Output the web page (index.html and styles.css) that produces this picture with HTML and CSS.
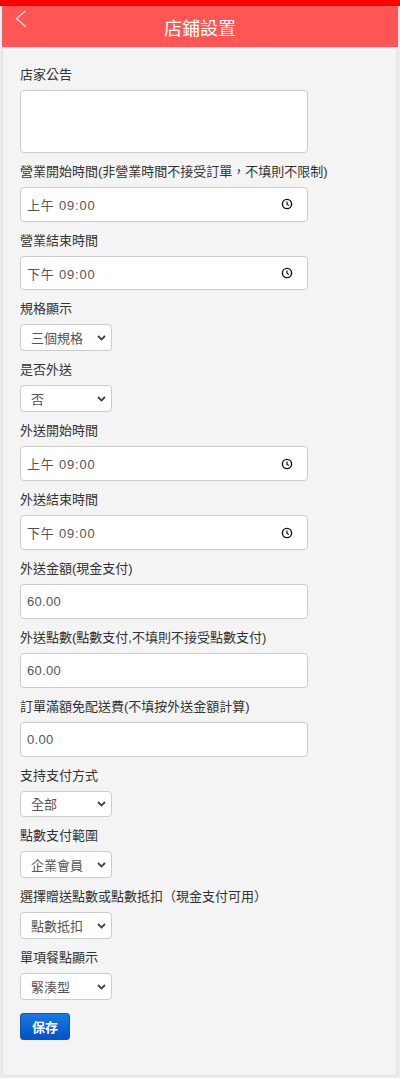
FILE: index.html
```html
<!DOCTYPE html>
<html lang="zh-Hant">
<head>
<meta charset="utf-8">
<title>店鋪設置</title>
<link rel="stylesheet" href="styles.css">
</head>
<body>
<div class="topbar"></div>
<div class="wrap">
  <header class="header">
    <svg class="back" width="14" height="20" viewBox="0 0 14 20"><polyline points="11,1.5 1.5,9.5 11,18" fill="none" stroke="#ffd6d6" stroke-width="1.4"/></svg>
    <h1 class="title">店鋪設置</h1>
  </header>
  <main class="panel">
    <label class="lbl first">店家公告</label>
    <div class="textarea"></div>

    <label class="lbl">營業開始時間(非營業時間不接受訂單，不填則不限制)</label>
    <div class="input time"><span>上午 09:00</span><svg class="clock" width="12" height="12" viewBox="0 0 12 12"><circle cx="6" cy="6" r="4.6" fill="none" stroke="#111" stroke-width="1.4"/><polyline points="6,3.4 6,6.2 7.8,7.6" fill="none" stroke="#111" stroke-width="1.2"/></svg></div>

    <label class="lbl">營業結束時間</label>
    <div class="input time"><span>下午 09:00</span><svg class="clock" width="12" height="12" viewBox="0 0 12 12"><circle cx="6" cy="6" r="4.6" fill="none" stroke="#111" stroke-width="1.4"/><polyline points="6,3.4 6,6.2 7.8,7.6" fill="none" stroke="#111" stroke-width="1.2"/></svg></div>

    <label class="lbl">規格顯示</label>
    <div class="select"><span>三個規格</span><svg class="chev" width="9" height="6" viewBox="0 0 9 6"><polyline points="1,1 4.5,4.5 8,1" fill="none" stroke="#444" stroke-width="1.8"/></svg></div>

    <label class="lbl">是否外送</label>
    <div class="select"><span>否</span><svg class="chev" width="9" height="6" viewBox="0 0 9 6"><polyline points="1,1 4.5,4.5 8,1" fill="none" stroke="#444" stroke-width="1.8"/></svg></div>

    <label class="lbl">外送開始時間</label>
    <div class="input time"><span>上午 09:00</span><svg class="clock" width="12" height="12" viewBox="0 0 12 12"><circle cx="6" cy="6" r="4.6" fill="none" stroke="#111" stroke-width="1.4"/><polyline points="6,3.4 6,6.2 7.8,7.6" fill="none" stroke="#111" stroke-width="1.2"/></svg></div>

    <label class="lbl">外送結束時間</label>
    <div class="input time"><span>下午 09:00</span><svg class="clock" width="12" height="12" viewBox="0 0 12 12"><circle cx="6" cy="6" r="4.6" fill="none" stroke="#111" stroke-width="1.4"/><polyline points="6,3.4 6,6.2 7.8,7.6" fill="none" stroke="#111" stroke-width="1.2"/></svg></div>

    <label class="lbl">外送金額(現金支付)</label>
    <div class="input"><span>60.00</span></div>

    <label class="lbl">外送點數(點數支付,不填則不接受點數支付)</label>
    <div class="input"><span>60.00</span></div>

    <label class="lbl">訂單滿額免配送費(不填按外送金額計算)</label>
    <div class="input"><span>0.00</span></div>

    <label class="lbl">支持支付方式</label>
    <div class="select"><span>全部</span><svg class="chev" width="9" height="6" viewBox="0 0 9 6"><polyline points="1,1 4.5,4.5 8,1" fill="none" stroke="#444" stroke-width="1.8"/></svg></div>

    <label class="lbl">點數支付範圍</label>
    <div class="select"><span>企業會員</span><svg class="chev" width="9" height="6" viewBox="0 0 9 6"><polyline points="1,1 4.5,4.5 8,1" fill="none" stroke="#444" stroke-width="1.8"/></svg></div>

    <label class="lbl">選擇贈送點數或點數抵扣（現金支付可用）</label>
    <div class="select"><span>點數抵扣</span><svg class="chev" width="9" height="6" viewBox="0 0 9 6"><polyline points="1,1 4.5,4.5 8,1" fill="none" stroke="#444" stroke-width="1.8"/></svg></div>

    <label class="lbl">單項餐點顯示</label>
    <div class="select"><span>緊湊型</span><svg class="chev" width="9" height="6" viewBox="0 0 9 6"><polyline points="1,1 4.5,4.5 8,1" fill="none" stroke="#444" stroke-width="1.8"/></svg></div>

    <button class="btn">保存</button>
  </main>
</div>
</body>
</html>
```
FILE: styles.css
```css
html, body {
  margin: 0;
  padding: 0;
}
body {
  background: #e8ebef;
  font-family: "Liberation Sans", "Noto Sans CJK TC", sans-serif;
  font-size: 13px;
  color: #333;
  width: 400px;
  height: 1078px;
  overflow: hidden;
}
.topbar {
  height: 6px;
  background: #ff0000;
}
.wrap {
  padding: 0 2px 0 2px;
  display: flex;
  flex-direction: column;
}
.header {
  position: relative;
  height: 41px;
  background: #ff5555;
  display: flex;
  justify-content: center;
}
.back {
  position: absolute;
  left: 13px;
  top: 3px;
}
.title {
  margin: 0;
  padding-top: 5px;
  font-size: 18px;
  font-weight: normal;
  line-height: 36px;
  color: #fff;
}
.panel {
  background: #f4f4f4;
  border: 1px solid #dfe2e6;
  border-radius: 0 0 3px 3px;
  margin-right: 1px;
  padding: 17px 17px 35px;
  height: 1029px;
  box-sizing: border-box;
  display: flex;
  flex-direction: column;
  align-items: flex-start;
}
.lbl {
  display: block;
  line-height: 20px;
  margin: 9px 0 5px;
  color: #333;
  white-space: nowrap;
}
.lbl.first {
  margin-top: 0;
}
.textarea {
  width: 288px;
  height: 63px;
  box-sizing: border-box;
  background: #fff;
  border: 1px solid #ccc;
  border-radius: 4px;
}
.input {
  width: 288px;
  height: 35px;
  box-sizing: border-box;
  background: #fff;
  border: 1px solid #ccc;
  border-radius: 4px;
  padding: 0 14px 0 6px;
  display: flex;
  align-items: center;
  justify-content: space-between;
  color: #555;
  font-size: 13px;
}
.input span {
  letter-spacing: 0.3px;
}
.time span {
  letter-spacing: 0.8px;
}
.clock {
  display: block;
}
.select {
  width: 92px;
  height: 27px;
  box-sizing: border-box;
  background: #fff;
  border: 1px solid #ccc;
  border-radius: 4px;
  padding: 0 5px 0 10px;
  display: flex;
  align-items: center;
  justify-content: space-between;
  color: #555;
}
.chev {
  display: block;
}
.btn {
  margin-top: 13px;
  width: 50px;
  height: 27px;
  border: 1px solid #0b56b8;
  border-radius: 3px;
  background: linear-gradient(#1a7ae0, #0052c6);
  color: #fff;
  font-family: "Liberation Sans", "Noto Sans CJK TC", sans-serif;
  font-size: 13px;
  font-weight: bold;
  padding: 0;
}
```
